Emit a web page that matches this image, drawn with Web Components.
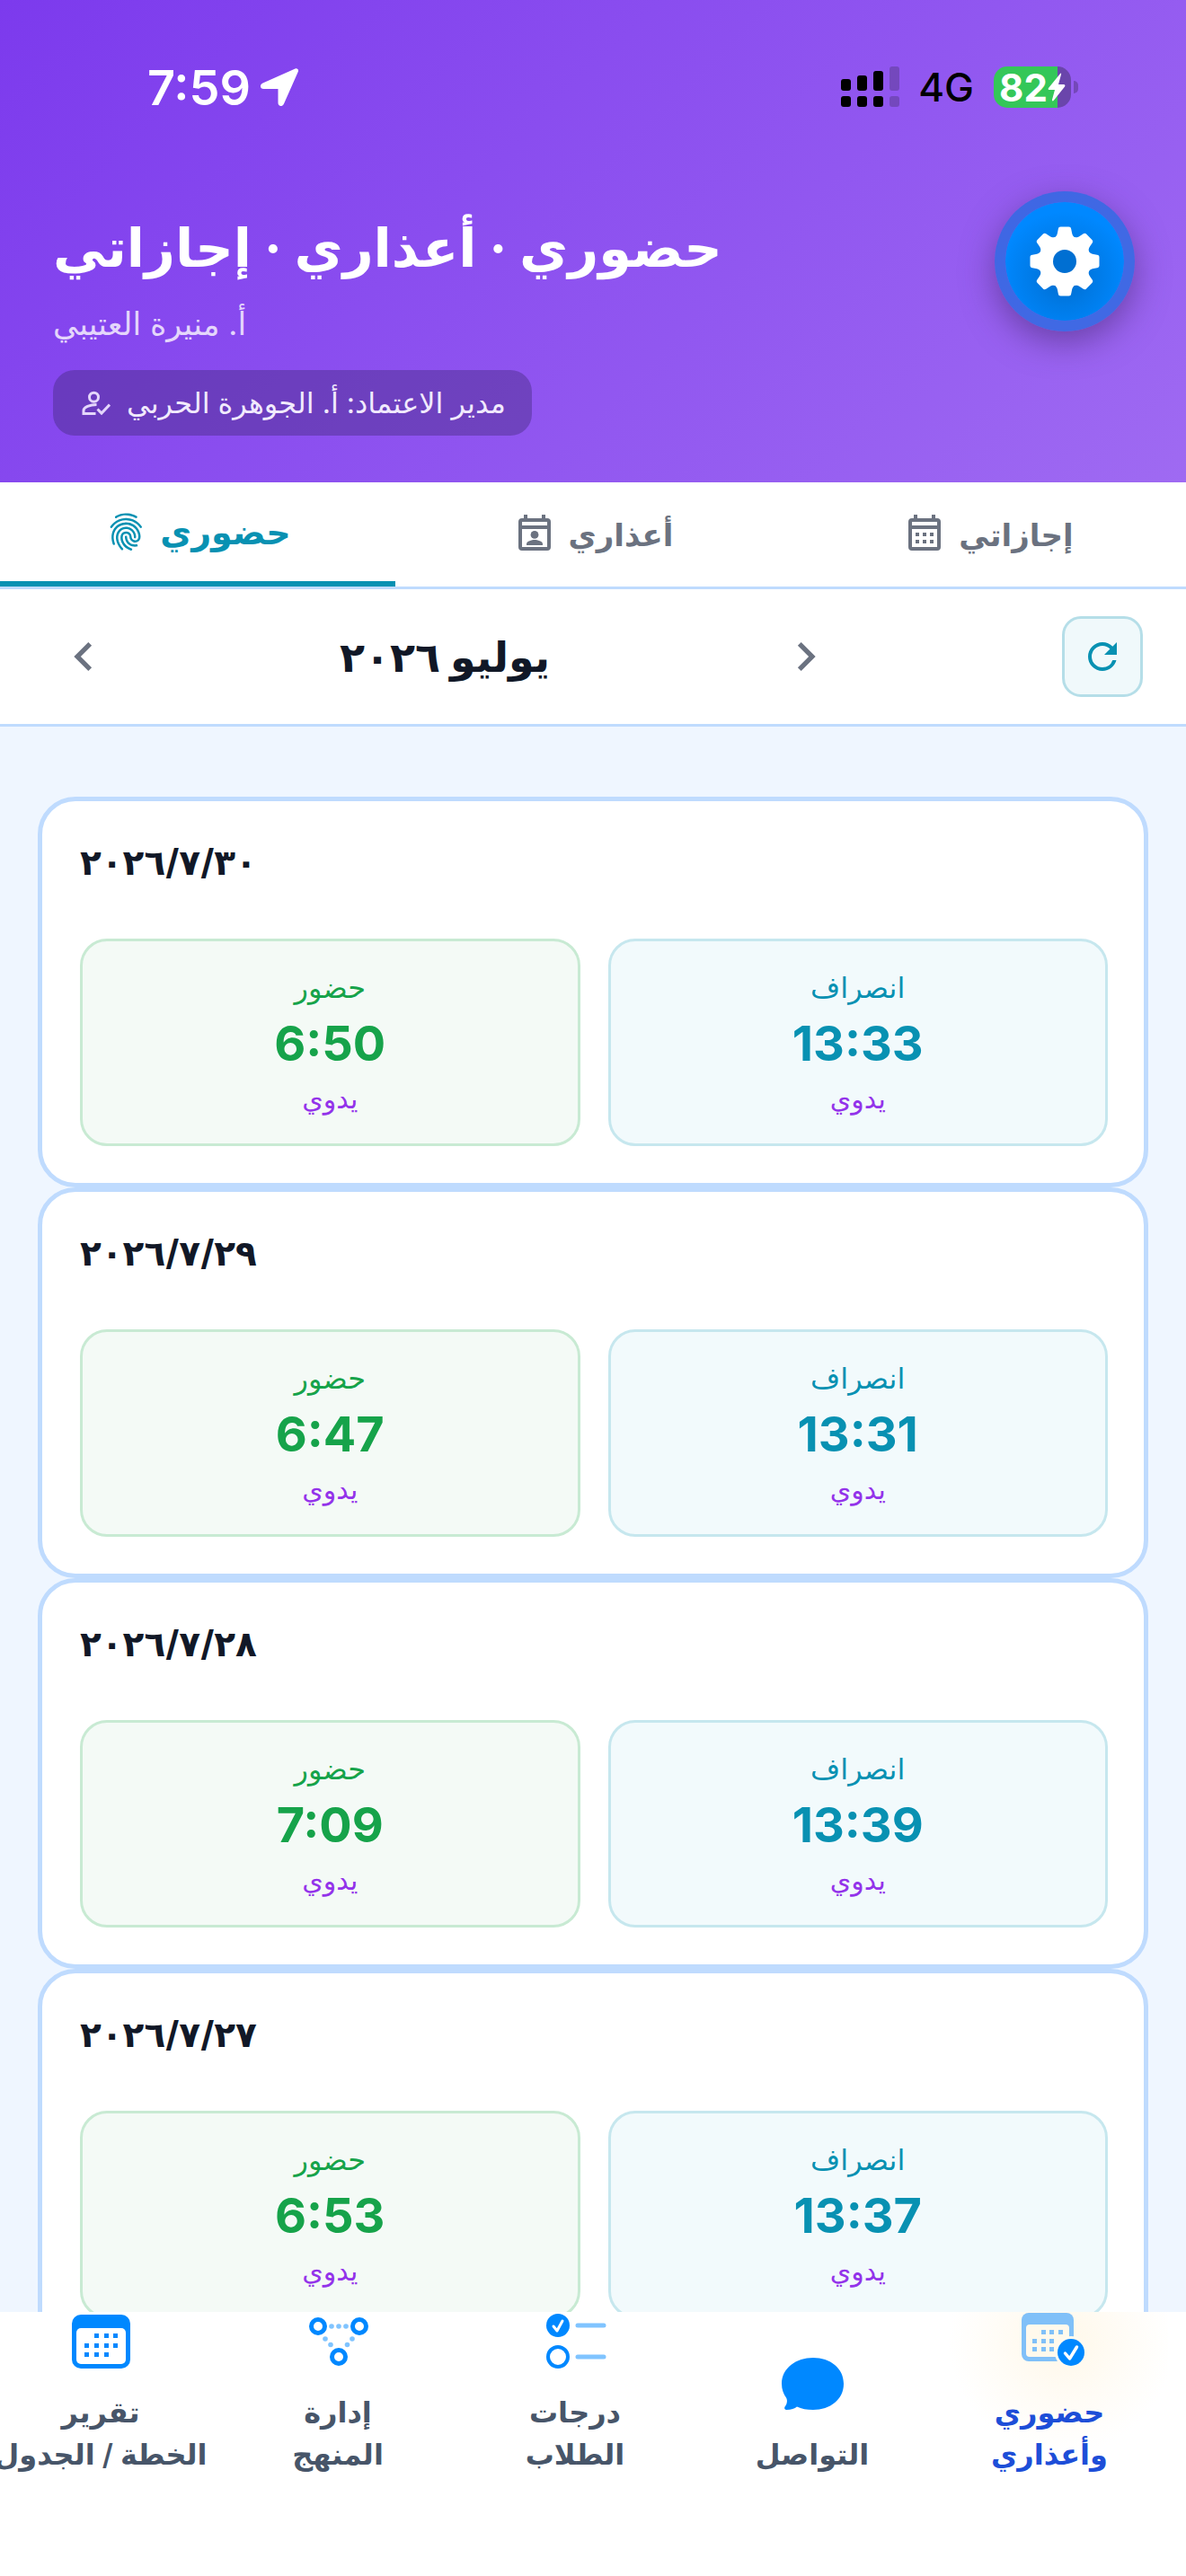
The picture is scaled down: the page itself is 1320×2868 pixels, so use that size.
<!DOCTYPE html>
<html lang="ar">
<head>
<meta charset="utf-8">
<meta name="viewport" content="width=device-width, initial-scale=1">
<title>حضوري</title>
<style>
  body {
    margin: 0;
    background: #eff6ff;
    color: #111827;
    font-family: Inter, "DejaVu Sans", sans-serif;
  }
</style>
</head>
<body>
<app-shell></app-shell>

<script>
const icons = {
  chevronLeft: `<svg viewBox="0 0 24 24"><path fill="currentColor" d="M15.41 16.58 10.83 12l4.58-4.59L14 6l-6 6 6 6z"/></svg>`,
  chevronRight: `<svg viewBox="0 0 24 24"><path fill="currentColor" d="M8.59 16.58 13.17 12 8.59 7.41 10 6l6 6-6 6z"/></svg>`,
  refresh: `<svg viewBox="0 0 24 24"><path fill="currentColor" d="M17.65 6.35C16.2 4.9 14.21 4 12 4a8 8 0 0 0 0 16c3.73 0 6.84-2.55 7.73-6h-2.08A5.99 5.99 0 0 1 12 18a6 6 0 0 1 0-12c1.66 0 3.14.69 4.22 1.78L13 11h7V4z"/></svg>`,
  fingerprint: `<svg viewBox="0 0 24 24"><path fill="currentColor" d="M11.83,1.73C8.43,1.79 6.23,3.32 6.23,3.32C5.95,3.5 5.88,3.91 6.07,4.19C6.27,4.5 6.66,4.55 6.96,4.35C6.96,4.35 11.27,1.15 17.46,4.38C17.75,4.55 18.14,4.45 18.31,4.15C18.5,3.85 18.37,3.47 18.03,3.28C16.36,2.4 14.78,1.96 13.36,1.8C12.83,1.74 12.32,1.72 11.83,1.73M12.22,4.34C6.26,4.26 3.41,9.05 3.41,9.05C3.22,9.34 3.3,9.72 3.58,9.91C3.87,10.1 4.26,10 4.5,9.68C4.5,9.68 6.92,5.5 12.2,5.59C17.5,5.66 19.82,9.65 19.82,9.65C20,9.94 20.38,10.04 20.68,9.87C21,9.69 21.07,9.31 20.9,9C20.9,9 18.15,4.42 12.22,4.34M11.5,6.82C9.82,6.94 8.21,7.55 7,8.56C4.62,10.53 3.1,14.14 4.77,19C4.88,19.33 5.24,19.5 5.57,19.39C5.89,19.28 6.07,18.92 5.95,18.58C4.41,14.13 5.78,11.2 7.8,9.5C9.77,7.89 13.25,7.5 15.84,9.1C17.11,9.9 18.1,11.28 18.6,12.64C19.11,14 19.08,15.32 18.67,15.94C18.25,16.59 17.4,16.83 16.65,16.64C15.9,16.45 15.29,15.91 15.26,14.77C15.23,13.06 13.89,12 12.5,11.84C11.16,11.68 9.61,12.4 9.21,14C8.45,16.92 10.36,21.07 14.78,22.45C15.11,22.55 15.46,22.37 15.57,22.04C15.67,21.71 15.5,21.35 15.15,21.25C11.32,20.06 9.87,16.43 10.42,14.29C10.66,13.33 11.5,13 12.38,13.08C13.25,13.18 14,13.7 14,14.79C14.05,16.43 15.12,17.54 16.34,17.85C17.56,18.16 18.97,17.77 19.72,16.62C20.5,15.45 20.37,13.8 19.78,12.21C19.18,10.61 18.07,9.03 16.5,8.04C14.96,7.08 13.19,6.7 11.5,6.82M11.86,9.25C10.08,9.32 8.3,10.24 7.28,12.18C5.96,14.67 6.56,17.21 7.44,19.04C8.33,20.88 9.54,22.1 9.54,22.1C9.78,22.35 10.17,22.35 10.42,22.11C10.67,21.87 10.67,21.5 10.43,21.23C10.43,21.23 9.36,20.13 8.57,18.5C7.78,16.87 7.3,14.81 8.38,12.77C9.5,10.67 11.5,10.16 13.26,10.67C15.04,11.19 16.53,12.74 16.5,15.03C16.46,15.38 16.71,15.68 17.06,15.7C17.4,15.73 17.7,15.47 17.73,15.06C17.79,12.2 15.87,10.13 13.61,9.47C13.04,9.31 12.45,9.23 11.86,9.25M12.08,14.25C11.73,14.26 11.46,14.55 11.47,14.89C11.47,14.89 11.5,16.37 12.31,17.8C13.15,19.23 14.93,20.59 18.03,20.3C18.37,20.28 18.64,20 18.62,19.64C18.6,19.29 18.3,19.03 17.91,19.06C15.19,19.31 14.04,18.28 13.39,17.17C12.74,16.07 12.72,14.88 12.72,14.88C12.72,14.53 12.44,14.25 12.08,14.25Z"/></svg>`,
  calendarUser: `<svg viewBox="0 0 24 24"><path fill="currentColor" fill-rule="evenodd" d="M6 1h2v2h8V1h2v2h1a2 2 0 0 1 2 2v14a2 2 0 0 1-2 2H5a2 2 0 0 1-2-2V5a2 2 0 0 1 2-2h1zM5 5v2h14V5zM5 9v10h14V9z"/><circle cx="12" cy="12.2" r="2.2" fill="currentColor"/><path fill="currentColor" d="M7.5 18v-.7c0-1.5 3-2.3 4.5-2.3s4.5.8 4.5 2.3v.7z"/></svg>`,
  calendarMonth: `<svg viewBox="0 0 24 24"><path fill="currentColor" fill-rule="evenodd" d="M6 1h2v2h8V1h2v2h1a2 2 0 0 1 2 2v14a2 2 0 0 1-2 2H5a2 2 0 0 1-2-2V5a2 2 0 0 1 2-2h1zM5 5v2h14V5zM5 9v10h14V9zM7 11h2v2H7zM11 11h2v2h-2zM15 11h2v2h-2zM7 15h2v2H7zM11 15h2v2h-2zM15 15h2v2h-2z"/></svg>`,
  userCheck: `<svg viewBox="0 0 32 28" fill="none" stroke="currentColor" stroke-width="3"><circle cx="13.5" cy="7.2" r="5"/><path d="M16.5 15.5C9 15.5 2 18.5 2 22v3.5h13.5M17.5 20.5l4.500 4.500 9-9.5"/></svg>`,
  report: `<svg viewBox="0 0 70 64"><rect x="3" y="2" width="65" height="60" rx="10" fill="#0088ff"/><rect x="8" y="17" width="55" height="40" rx="5" fill="#fff"/><path fill="#0088ff" d="M28 23h5v5h-5zM39 23h5v5h-5zM49 23h5v5h-5zM17 34h5v5h-5zM28 34h5v5h-5zM39 34h5v5h-5zM49 34h5v5h-5zM17 44h5v5h-5zM28 44h5v5h-5zM39 44h5v5h-5z"/></svg>`,
  nodes: `<svg viewBox="0 0 70 64"><g fill="none" stroke="#0088ff" stroke-width="5"><circle cx="13" cy="15" r="7.5"/><circle cx="59" cy="15" r="7.5"/><circle cx="36" cy="49" r="7.5"/></g><g fill="#80c4ff"><circle cx="28" cy="15" r="2.8"/><circle cx="36" cy="15" r="2.8"/><circle cx="44" cy="15" r="2.8"/><circle cx="21" cy="29" r="2.8"/><circle cx="27" cy="35.500" r="2.8"/><circle cx="51" cy="29" r="2.8"/><circle cx="45.500" cy="35.500" r="2.8"/></g></svg>`,
  checklist: `<svg viewBox="0 0 70 64"><circle cx="16" cy="14" r="13" fill="#0088ff"/><path d="M11 15l4 5 6-11" fill="none" stroke="#fff" stroke-width="3" stroke-linecap="round" stroke-linejoin="round"/><circle cx="16" cy="49" r="11" fill="none" stroke="#0088ff" stroke-width="4"/><path d="M38 14h29M38 49h29" stroke="#80c4ff" stroke-width="5" stroke-linecap="round"/></svg>`,
  chat: `<svg viewBox="0 0 70 64"><path fill="#0088ff" d="M36 3C17 3 1 14.500 1 32c0 6 2 11.500 5 15.500 2 3.500.5 8-1.500 10-1 2 0 3.500 2 3.500 5 0 9-1.500 11.500-3.500 5 2.500 11 3.500 18 3.500 19 0 34-11.500 34-29S55 3 36 3z"/></svg>`,
  attendance: `<svg viewBox="-3 2 70 64"><rect x="1" y="2" width="58" height="54" rx="8" fill="#80c0f8"/><rect x="6" y="15" width="48" height="36" rx="4" fill="#fff9ec"/><path fill="#80c0f8" d="M23 21h5v5h-5zM32 21h5v5h-5zM42 21h5v5h-5zM13 31h5v5h-5zM23 31h5v5h-5zM32 31h5v5h-5zM13 40h5v5h-5zM23 40h5v5h-5zM32 40h5v5h-5z"/><circle cx="56" cy="46" r="18" fill="#fffaf0"/><circle cx="56" cy="46" r="15" fill="#0088ff"/><path d="M49.500 47l5 6 8-13" fill="none" stroke="#fff" stroke-width="3.500" stroke-linecap="round" stroke-linejoin="round"/></svg>`
};

function gear() {
  let teeth = "";
  for (let a = 0; a < 360; a += 45) {
    teeth += `<path transform="rotate(${a})" d="M-12-26C-9.500-28-8.500-29-8-32l.8-4c.3-1.700 1-2.500 2.700-2.500h9c1.700 0 2.400.8 2.700 2.500l.8 4c.5 3 1.500 4 4 6z"/>`;
  }
  return `<svg viewBox="-40 -40 80 80" fill="#fff"><circle r="29"/>${teeth}<circle r="13" fill="#006fd2"/></svg>`;
}

function makeTemplate(html) {
  const template = document.createElement("template");
  template.innerHTML = html;
  return template;
}

class BaseElement extends HTMLElement {
  constructor(template) {
    super();
    this.attachShadow({ mode: "open" });
    this.shadowRoot.appendChild(template.content.cloneNode(true));
    this.shadowRoot.querySelectorAll("[data-icon]").forEach((el) => {
      const name = el.dataset.icon || this.getAttribute("icon");
      if (icons[name]) el.innerHTML = icons[name];
    });
  }
}

const statusBarTemplate = makeTemplate(`
  <style>
    :host {
      display: flex;
      justify-content: space-between;
      align-items: center;
      height: 62px;
      padding: 0 120px 0 164px;
      font-size: 54px;
      font-weight: 600;
    }
    .side { display: flex; align-items: center; }
    .arrow { width: 44px; height: 44px; margin-left: 10px; }
    .bars { width: 66px; height: 46px; margin-right: 20px; }
    .network { color: #000; font-size: 44px; font-weight: 500; margin-right: 22px; }
    .battery {
      display: flex;
      align-items: center;
      justify-content: center;
      box-sizing: border-box;
      width: 86px;
      height: 46px;
      border-radius: 15px;
      background: linear-gradient(to right, #34c759 82%, #6a45ab 82%);
      font-size: 42px;
      font-weight: 700;
    }
    .bolt { width: 20px; height: 32px; }
    .nub { width: 5px; height: 14px; margin-left: 3px; border-radius: 0 6px 6px 0; background: #7448b8; }
    svg { display: block; width: 100%; height: 100%; }
  </style>
  <div class="side">
    <span>7:59</span>
    <span class="arrow"><svg viewBox="0 0 44 44" fill="#fff"><path d="M39.500 1.500 3.500 17.500c-4 1.800-3 6.500 1 6.500h16v15.500c0 4 4.500 5 6.500 1l15.500-35c1.500-3-.5-5-3-4z"/></svg></span>
  </div>
  <div class="side">
    <span class="bars"><svg viewBox="0 0 66 46"><g fill="#000"><rect y="14" width="11" height="13" rx="3"/><rect x="18" y="10" width="11" height="17" rx="3"/><rect x="36" y="5" width="11" height="22" rx="3"/><rect y="33" width="11" height="12" rx="3"/><rect x="18" y="33" width="11" height="12" rx="3"/><rect x="36" y="33" width="11" height="12" rx="3"/></g><g fill="#7448bd"><rect x="54" width="11" height="27" rx="3"/><rect x="54" y="33" width="11" height="12" rx="3"/></g></svg></span>
    <span class="network">4G</span>
    <span class="battery">82<span class="bolt"><svg viewBox="0 0 20 32" fill="#fff"><path d="M14 1 1 17c-1 1.500 0 2 1 2h6L5 30c0 2 1 1.500 2 .500l12-15c1-1.500 0-2.500-1-2.500h-6l3-11c.5-2-.5-1.500-1-1z"/></svg></span></span>
    <span class="nub"></span>
  </div>
`);

class StatusBar extends BaseElement {
  constructor() { super(statusBarTemplate); }
}

const headerTemplate = makeTemplate(`
  <style>
    :host {
      display: block;
      box-sizing: border-box;
      height: 537px;
      padding-top: 66px;
      color: #fff;
      background: linear-gradient(135deg, #7c3aed, #9f6af2);
    }
    .row {
      display: flex;
      justify-content: space-between;
      align-items: flex-start;
      padding: 85px 57px 0 59px;
    }
    .info { display: flex; flex-direction: column; align-items: flex-start; padding-top: 21px; }
    h1 { margin: 0; font-size: 59px; font-weight: 700; line-height: 84px; }
    .name { margin: 14px 0 0; font-size: 35px; line-height: 56px; color: #e4d6fb; }
    .pill {
      display: flex;
      align-items: center;
      gap: 18px;
      box-sizing: border-box;
      height: 73px;
      margin-top: 24px;
      padding: 0 29px 0 32px;
      border-radius: 24px;
      background: rgba(62, 40, 118, .4);
      font-size: 32px;
      color: #f1eafd;
    }
    .pill .icon { width: 32px; height: 28px; color: #e4d6fb; }
    button {
      box-sizing: border-box;
      width: 156px;
      height: 156px;
      padding: 0;
      border: 12px solid rgba(10, 110, 220, .62);
      border-radius: 50%;
      background: radial-gradient(circle at 50% 62%, #006bcb 0, #007ae6 32%, #0088ff 68%) padding-box;
      box-shadow: 0 12px 36px rgba(70, 40, 110, .55);
    }
    button svg { width: 80px; height: 80px; margin: auto; }
    svg { display: block; width: 100%; }
  </style>
  <slot></slot>
  <div class="row">
    <div class="info">
      <h1>حضوري · أعذاري · إجازاتي</h1>
      <p class="name">أ. منيرة العتيبي</p>
      <div class="pill"><span class="icon" data-icon="userCheck"></span><span>مدير الاعتماد: أ. الجوهرة الحربي</span></div>
    </div>
    <button aria-label="الإعدادات">${gear()}</button>
  </div>
`);

class PageHeader extends BaseElement {
  constructor() { super(headerTemplate); }
}

const tabTemplate = makeTemplate(`
  <style>
    :host { display: block; flex: 1; }
    button {
      display: flex;
      align-items: center;
      justify-content: center;
      gap: 14px;
      box-sizing: border-box;
      width: 100%;
      height: 116px;
      padding: 0;
      border: 0;
      background: none;
      color: #6b7280;
      font: inherit;
      font-size: 34px;
      font-weight: 600;
    }
    :host([active]) button {
      color: #0891b2;
      border-bottom: 6px solid #0891b2;
      font-size: 38px;
      font-weight: 700;
    }
    .icon { width: 48px; height: 48px; }
    svg { display: block; }
  </style>
  <button role="tab"><span class="icon" data-icon></span><slot></slot></button>
`);

class TabItem extends BaseElement {
  constructor() { super(tabTemplate); }
}

const monthTemplate = makeTemplate(`
  <style>
    :host {
      display: flex;
      align-items: center;
      gap: 240px;
      padding: 30px 48px;
      background: #fff;
      border-bottom: 3px solid #bfdbfe;
    }
    .picker { display: flex; flex: 1; align-items: center; justify-content: space-between; }
    h2 { margin: 0; font-size: 46px; font-weight: 700; line-height: 60px; }
    button {
      display: grid;
      place-items: center;
      box-sizing: border-box;
      width: 90px;
      height: 90px;
      padding: 0;
      border: 0;
      background: none;
      color: #6b7280;
    }
    .step span { width: 64px; height: 64px; }
    .refresh { border: 3px solid #b5dee8; border-radius: 21px; background: #f0f9fb; color: #0891b2; }
    .refresh span { width: 48px; height: 48px; }
    svg { display: block; }
  </style>
  <div class="picker">
    <button class="step" aria-label="السابق"><span data-icon="chevronLeft"></span></button>
    <h2><slot></slot></h2>
    <button class="step" aria-label="التالي"><span data-icon="chevronRight"></span></button>
  </div>
  <button class="refresh" aria-label="تحديث"><span data-icon="refresh"></span></button>
`);

class MonthPicker extends BaseElement {
  constructor() { super(monthTemplate); }
}

const tileTemplate = makeTemplate(`
  <style>
    :host {
      display: flex;
      flex: 1;
      flex-direction: column;
      align-items: center;
      box-sizing: border-box;
      height: 231px;
      padding-top: 27px;
      border: 3px solid #c8ead3;
      border-radius: 30px;
      background: #f4faf6;
      color: #16a34a;
    }
    :host([kind="out"]) { border-color: #c6e7ee; background: #f2fafc; color: #0891b2; }
    .label { font-size: 32px; line-height: 50px; }
    .time { font-size: 54px; font-weight: 700; line-height: 74px; }
    .source { font-size: 30px; line-height: 48px; color: #9333ea; }
  </style>
  <span class="label"></span>
  <span class="time"></span>
  <span class="source">يدوي</span>
`);

class TimeTile extends BaseElement {
  static get observedAttributes() {
    return ["label", "time"];
  }
  constructor() {
    super(tileTemplate);
  }
  attributeChangedCallback(name, oldValue, value) {
    this.shadowRoot.querySelector("." + name).textContent = value;
  }
}

const cardTemplate = makeTemplate(`
  <style>
    :host {
      display: block;
      box-sizing: border-box;
      height: 435px;
      padding: 38px 40px 42px 42px;
      border: 5px solid #bfdbfe;
      border-radius: 42px;
      background: #fff;
    }
    h3 { margin: 0 0 55px; font-size: 39px; font-weight: 700; line-height: 60px; }
    .tiles { display: flex; gap: 31px; }
  </style>
  <h3></h3>
  <div class="tiles">
    <time-tile label="حضور"></time-tile>
    <time-tile kind="out" label="انصراف"></time-tile>
  </div>
`);

class DayCard extends BaseElement {
  constructor() {
    super(cardTemplate);
    const tiles = this.shadowRoot.querySelectorAll("time-tile");
    this.shadowRoot.querySelector("h3").textContent = this.getAttribute("date");
    tiles[0].setAttribute("time", this.getAttribute("in"));
    tiles[1].setAttribute("time", this.getAttribute("out"));
  }
}

const navItemTemplate = makeTemplate(`
  <style>
    :host { display: block; flex: 1; }
    a {
      display: flex;
      flex-direction: column;
      align-items: center;
      justify-content: flex-end;
      height: 182px;
      color: #475569;
      font-size: 32px;
      font-weight: 600;
      line-height: 47px;
      text-align: center;
      text-decoration: none;
      white-space: nowrap;
    }
    :host([active]) a {
      color: #1d4ed8;
      background: radial-gradient(circle at 55% 18%, #fff8e9 0, #fffcf6 70px, #fff 125px);
    }
    .icon { width: 70px; height: 64px; margin-bottom: 23px; }
    svg { display: block; width: 100%; height: 100%; overflow: visible; }
  </style>
  <a href="#"><span class="icon" data-icon></span><span><slot></slot></span></a>
`);

class NavItem extends BaseElement {
  constructor() { super(navItemTemplate); }
}

const shellTemplate = makeTemplate(`
  <style>
    :host { display: flex; flex-direction: column; height: 100vh; overflow: hidden; }
    .tabs { display: flex; background: #fff; border-bottom: 3px solid #bfdbfe; }
    main { flex: 1 1 0; min-height: 0; overflow: hidden; padding: 78px 42px 0; }
    nav { background: #fff; padding-bottom: 112px; overflow: hidden; }
    .items { display: flex; margin: 0 20px 0 -20px; }
  </style>
  <page-header><status-bar></status-bar></page-header>
  <div class="tabs" role="tablist">
    <tab-item icon="fingerprint" active>حضوري</tab-item>
    <tab-item icon="calendarUser">أعذاري</tab-item>
    <tab-item icon="calendarMonth">إجازاتي</tab-item>
  </div>
  <month-picker>يوليو ٢٠٢٦</month-picker>
  <main>
    <day-card date="٢٠٢٦/٧/٣٠" in="6:50" out="13:33"></day-card>
    <day-card date="٢٠٢٦/٧/٢٩" in="6:47" out="13:31"></day-card>
    <day-card date="٢٠٢٦/٧/٢٨" in="7:09" out="13:39"></day-card>
    <day-card date="٢٠٢٦/٧/٢٧" in="6:53" out="13:37"></day-card>
  </main>
  <nav>
    <div class="items">
      <nav-item icon="report">تقرير<br>الخطة / الجدول</nav-item>
      <nav-item icon="nodes">إدارة<br>المنهج</nav-item>
      <nav-item icon="checklist">درجات<br>الطلاب</nav-item>
      <nav-item icon="chat">التواصل</nav-item>
      <nav-item icon="attendance" active>حضوري<br>وأعذاري</nav-item>
    </div>
  </nav>
`);

class AppShell extends BaseElement {
  constructor() { super(shellTemplate); }
}

window.customElements.define("status-bar", StatusBar);
window.customElements.define("page-header", PageHeader);
window.customElements.define("tab-item", TabItem);
window.customElements.define("month-picker", MonthPicker);
window.customElements.define("time-tile", TimeTile);
window.customElements.define("day-card", DayCard);
window.customElements.define("nav-item", NavItem);
window.customElements.define("app-shell", AppShell);
</script>
</body>
</html>
